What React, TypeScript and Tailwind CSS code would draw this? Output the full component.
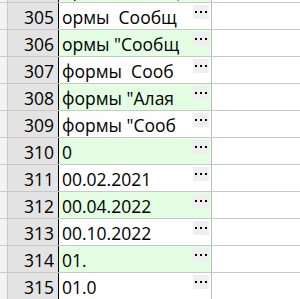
import React from 'react';

// rows visible in the grid, the first one is scrolled mostly out of view
const ROWS: { n: number; text: string }[] = [
  { n: 304, text: 'ормы "Сообщ' },
  { n: 305, text: 'ормы  Сообщ' },
  { n: 306, text: 'ормы "Сообщ' },
  { n: 307, text: 'формы  Сооб' },
  { n: 308, text: 'формы "Алая' },
  { n: 309, text: 'формы "Сооб' },
  { n: 310, text: '0' },
  { n: 311, text: '00.02.2021' },
  { n: 312, text: '00.04.2022' },
  { n: 313, text: '00.10.2022' },
  { n: 314, text: '01.' },
  { n: 315, text: '01.0' },
];

function Row({ n, text, green }: { n: number; text: string; green: boolean }) {
  return (
    <div className="flex h-[27px] border-b border-[#c8c8c8]">
      <div className="w-[8px] shrink-0 bg-[#f3f3f3] border-r border-[#c8c8c8]" />
      <div className="w-[50px] shrink-0 bg-[#e3e3e3] flex items-center justify-end pr-[4px] pt-[2px] text-[17.5px] text-black">
        {n}
      </div>
      <div
        className={`w-[154px] shrink-0 border-l border-black border-r border-r-[#bdbdbd] flex items-center relative ${
          green ? 'bg-[#e4fee4]' : 'bg-white'
        }`}
      >
        <span className="pl-[3px] pt-[2px] whitespace-pre overflow-hidden w-[130px] text-[17.5px] text-black">
          {text}
        </span>
        <button className="absolute right-[2px] top-[2px] w-[16px] h-[14px] bg-[#efefef] flex items-center justify-center gap-[3px]">
          <span className="w-[2px] h-[2px] bg-black" />
          <span className="w-[2px] h-[2px] bg-black" />
          <span className="w-[2px] h-[2px] bg-black" />
        </button>
      </div>
    </div>
  );
}

export default function App() {
  return (
    <div
      className="w-[300px] h-[299px] overflow-hidden bg-white"
      style={{ fontFamily: '"Open Sans", "Noto Sans", sans-serif' }}
    >
      <div className="-mt-[24px]">
        {ROWS.map((r, i) => (
          <Row key={r.n} n={r.n} text={r.text} green={i % 2 === 0} />
        ))}
      </div>
    </div>
  );
}
